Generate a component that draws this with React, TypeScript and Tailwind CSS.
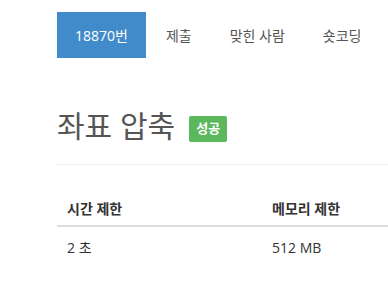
export default function App() {
  const tabs = ["18870번", "제출", "맞힌 사람", "숏코딩"];

  return (
    <div className="h-[285px] w-[388px] overflow-hidden bg-white font-['Open_Sans','Noto_Sans_CJK_KR',sans-serif] text-[#333]">
      <div className="w-[600px] pl-[57px] pt-[12px]">
        <ul className="flex">
          {tabs.map((t, i) => (
            <li
              key={t}
              className={
                i === 0
                  ? "flex h-[46px] items-center bg-[#428bca] px-[18px] text-[14px] text-white"
                  : "ml-[2px] flex h-[46px] items-center px-[18px] text-[14px] text-[#555]"
              }
            >
              {t}
            </li>
          ))}
        </ul>

        <div className="mt-[50px] flex items-end pb-[20px]">
          <h1 className="text-[30px] leading-[36px] text-[#555]">좌표 압축</h1>
          <span className="mb-[2px] ml-[14px] flex h-[26px] items-center rounded-[2px] bg-[#5cb85c] px-[7px] text-[13px] font-bold text-white">
            성공
          </span>
        </div>
        <div className="h-px bg-[#eee]" />

        <table className="mt-[25px] w-[410px] border-collapse text-left text-[14px]">
          <thead>
            <tr className="border-b-2 border-[#ddd]">
              <th className="w-[205px] px-[10px] pb-[6px] pt-[8px] font-bold">시간 제한</th>
              <th className="w-[205px] px-[10px] pb-[6px] pt-[8px] font-bold">메모리 제한</th>
            </tr>
          </thead>
          <tbody>
            <tr>
              <td className="px-[10px] pb-[8px] pt-[10px]">2 초</td>
              <td className="px-[10px] pb-[8px] pt-[10px]">512 MB</td>
            </tr>
          </tbody>
        </table>
      </div>
    </div>
  );
}
